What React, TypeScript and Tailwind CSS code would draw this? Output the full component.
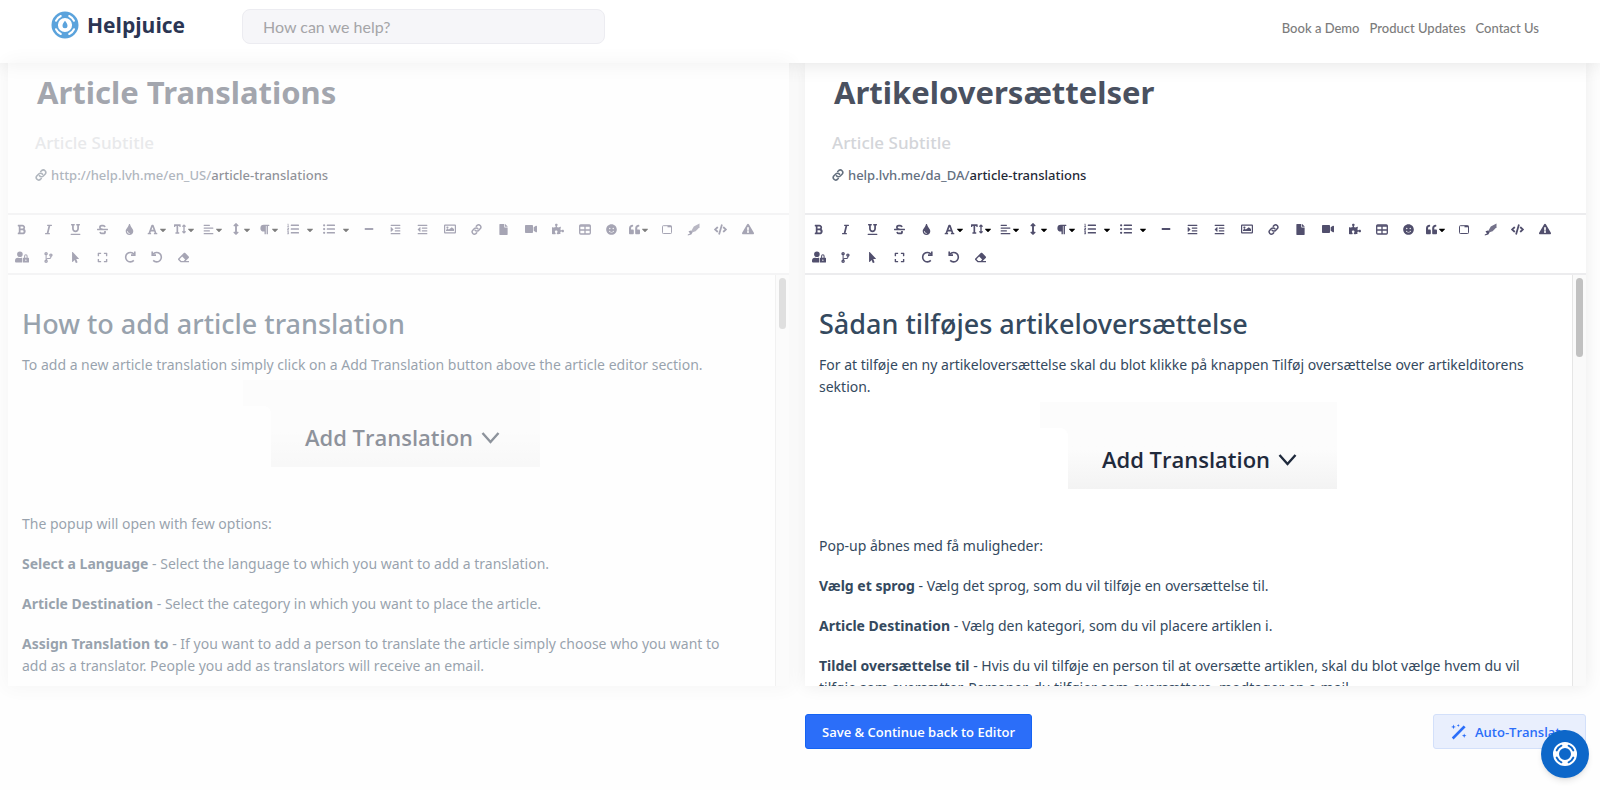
import type { ReactNode } from "react"
import {
    FaBold, FaItalic, FaUnderline, FaStrikethrough, FaTint, FaFont, FaTextHeight, FaAlignLeft, FaArrowsAltV,
    FaParagraph, FaListOl, FaListUl, FaMinus, FaIndent, FaOutdent, FaFile, FaVideo, FaPuzzlePiece,
    FaSmile, FaQuoteLeft, FaCode, FaExclamationTriangle, FaUserLock, FaCodeBranch, FaMousePointer,
    FaExpand, FaEraser, FaCaretDown
} from "react-icons/fa"

type Tool = { label: string, icon: ReactNode, menu?: boolean, wide?: boolean }

function LinkIcon({ size = 12 }: { size?: number }) {
    return (
        <svg width={size} height={size} viewBox="0 0 24 24" fill="none" stroke="currentColor" strokeWidth="3.2" strokeLinecap="round" strokeLinejoin="round">
            <path d="M9 13.500a5 5 0 0 0 7.500.500l4-4a5 5 0 0 0-7-7l-2 2" />
            <path d="M15 10.500a5 5 0 0 0-7.500-.500l-4 4a5 5 0 0 0 7 7l2-2" />
        </svg>
    )
}

function PictureIcon() {
    return (
        <svg width="12" height="10" viewBox="0 0 12 10" fill="currentColor">
            <path fillRule="evenodd" d="M1 .5h10a1 1 0 0 1 1 1v7a1 1 0 0 1-1 1H1a1 1 0 0 1-1-1v-7a1 1 0 0 1 1-1Zm.2 1.2v6.6h9.6V1.7Z" />
            <circle cx="3.4" cy="3.6" r="1.1" />
            <path d="M2 7V6l1.500-1.400 1.300.8L7.800 3.200 10 5v2Z" />
        </svg>
    )
}

function TableIcon() {
    return (
        <svg width="12" height="11" viewBox="0 0 12 11" fill="none" stroke="currentColor" strokeWidth="1.3">
            <rect x=".7" y="1" width="10.6" height="9" rx="1" />
            <path d="M.7 2h10.6M.7 6h10.6M6 2v8" />
        </svg>
    )
}

function TabIcon() {
    return (
        <svg width="10" height="9" viewBox="0 0 10 9" fill="none" stroke="currentColor" strokeWidth="1">
            <rect x=".5" y=".7" width="9" height="7.8" rx=".8" />
            <path d="M5.500 1.500h4" strokeWidth="1.600" />
        </svg>
    )
}

function BrushIcon() {
    return (
        <svg width="13" height="13" viewBox="0 0 13 13" fill="currentColor">
            <path d="M12.5.5v3.8L8.6 8.2 4.8 9.4 4 8.4 6.8 3.6Z" opacity=".8" />
            <path d="M1.5 8.3 4 7.4l1.5 2-1.2 2.2L.8 12.6v-1.2l2.2-.8Z" />
        </svg>
    )
}

function TurnIcon({ back }: { back?: boolean }) {
    return (
        <svg className={back ? "-scale-x-100" : ""} width="12" height="12" viewBox="0 0 12 12" fill="none" stroke="currentColor" strokeWidth="1.600">
            <path d="M9.800 9.400A4.700 4.700 0 1 1 10 3.200" />
            <path d="M10.800.6v3.500H7" />
        </svg>
    )
}

const tools: Tool[] = [
    { label: "Bold", icon: <FaBold size={11} /> },
    { label: "Italic", icon: <FaItalic size={11} /> },
    { label: "Underline", icon: <FaUnderline size={11} /> },
    { label: "Strikethrough", icon: <FaStrikethrough size={11} /> },
    { label: "Colors", icon: <FaTint size={11} /> },
    { label: "Font Family", icon: <FaFont size={11} />, menu: true },
    { label: "Font Size", icon: <FaTextHeight size={12} />, menu: true },
    { label: "Align", icon: <FaAlignLeft size={11} />, menu: true },
    { label: "Line Height", icon: <FaArrowsAltV size={12} />, menu: true },
    { label: "Paragraph Format", icon: <FaParagraph size={11} />, menu: true },
    { label: "Ordered List", icon: <FaListOl size={12} />, menu: true, wide: true },
    { label: "Unordered List", icon: <FaListUl size={12} />, menu: true, wide: true },
    { label: "Horizontal Line", icon: <FaMinus size={10} /> },
    { label: "Increase Indent", icon: <FaIndent size={11} /> },
    { label: "Decrease Indent", icon: <FaOutdent size={11} /> },
    { label: "Insert Image", icon: <PictureIcon /> },
    { label: "Insert Link", icon: <LinkIcon size={11} /> },
    { label: "Upload File", icon: <FaFile size={11} /> },
    { label: "Insert Video", icon: <FaVideo size={12} /> },
    { label: "Embed", icon: <FaPuzzlePiece size={12} /> },
    { label: "Insert Table", icon: <TableIcon /> },
    { label: "Emoticons", icon: <FaSmile size={11} /> },
    { label: "Quote", icon: <FaQuoteLeft size={11} />, menu: true },
    { label: "Tabs", icon: <TabIcon /> },
    { label: "Clear Style", icon: <BrushIcon /> },
    { label: "Code View", icon: <FaCode size={13} /> },
    { label: "Callout", icon: <FaExclamationTriangle size={12} /> },
    { label: "Internal Note", icon: <FaUserLock size={14} /> },
    { label: "Decision Tree", icon: <FaCodeBranch size={11} /> },
    { label: "Select All", icon: <FaMousePointer size={11} /> },
    { label: "Fullscreen", icon: <FaExpand size={11} /> },
    { label: "Redo", icon: <TurnIcon /> },
    { label: "Undo", icon: <TurnIcon back /> },
    { label: "Clear Formatting", icon: <FaEraser size={11} /> },
]

function Toolbar() {
    return (
        <div className="flex flex-wrap border-y-2 border-[#ececee] pr-4 pb-[2px] text-[#514f6d]">
            {tools.map((tool) => (
                <button
                    key={tool.label}
                    type="button"
                    aria-label={tool.label}
                    className={`flex h-7 items-center justify-center ${tool.wide ? "w-9 gap-[6px]" : tool.menu ? "w-7" : "w-[27px]"}`}
                >
                    {tool.icon}
                    {tool.menu && <FaCaretDown size={10} className="mt-[2px] shrink-0 text-black" />}
                </button>
            ))}
        </div>
    )
}

type PanelProps = {
    title: string
    host: string
    heading: string
    intro: string
    popup: string
    options: { name: string, text: string }[]
    faded?: boolean
}

function Panel({ title, host, heading, intro, popup, options, faded }: PanelProps) {
    return (
        <section className={`min-w-0 flex-1 bg-white shadow-[0_0_16px_rgba(0,0,0,0.08)] ${faded ? "opacity-50" : ""}`}>

            <div className="flex flex-col px-[27px] pt-2 pb-7">
                <h1 className="pl-[2px] text-[31px] leading-[42px] font-bold text-[#4a5160]">{title}</h1>
                <p className="mt-[18px] text-[17px] leading-6 font-medium text-[#d3d5d9]">Article Subtitle</p>
                <p className="mt-[10px] flex items-center text-[13px] leading-5 font-medium text-[#64707f]">
                    <span className="mr-1"><LinkIcon size={12} /></span>
                    <span>{host}<span className="text-[#1f2937]">article-translations</span></span>
                </p>
            </div>

            <Toolbar />

            {/* editor */}
            <div className="flex h-[411px] overflow-hidden text-[#34495e]">
                <div className="min-w-0 flex-1 px-[14px] pt-[31px] text-sm leading-[22px]">
                    <h2 className="text-[27px] leading-9 font-medium">{heading}</h2>
                    <p className="mt-3 pr-4">{intro}</p>
                    <div className="mx-auto mt-1 flex h-[87px] w-[297px] bg-linear-to-b from-[#fcfcfc] from-55% to-[#f3f3f3]">
                        <div className="mt-[26px] w-7 rounded-tr-lg bg-white"></div>
                        <div className="flex flex-1 items-end justify-center gap-2 pr-[6px] pb-4 font-['Open_Sans',sans-serif] text-[22px] leading-7 font-semibold text-[#1f2a3c]">
                            Add Translation
                            <svg className="mb-[6px]" width="19" height="14" viewBox="0 0 19 14" fill="none" stroke="currentColor" strokeWidth="2.4">
                                <path d="m1.5 2 8 9 8-9" />
                            </svg>
                        </div>
                    </div>
                    <p className="mt-[46px]">{popup}</p>
                    {options.map((option) => (
                        <p key={option.name} className="mt-[18px] pr-4">
                            <strong className="font-bold">{option.name}</strong> - {option.text}
                        </p>
                    ))}
                </div>

                {/* scrollbar */}
                <div className="w-[14px] border-l border-[#e6e6e6] bg-[#fafafa] px-[3px] pt-[3px]">
                    <div className={`rounded-full bg-[#c1c1c1] ${faded ? "h-[51px]" : "h-[79px]"}`}></div>
                </div>
            </div>

        </section>
    )
}

function LifeRing({ className }: { className: string }) {
    return (
        <svg className={className} viewBox="0 0 28 28" fill="none">
            <circle cx="14" cy="14" r="10.300" stroke="currentColor" strokeWidth="6.400" />
            <g stroke="white" strokeWidth="2" strokeLinecap="round">
                <path d="M5 9.800a10 10 0 0 1 4.800-4.800" />
                <path d="M18.200 5a10 10 0 0 1 4.800 4.800" />
                <path d="M23 18.200a10 10 0 0 1-4.800 4.800" />
                <path d="M9.800 23a10 10 0 0 1-4.800-4.800" />
            </g>
            <path d="M14 9.800c1.300 1.900 2.500 3.200 2.500 4.900a2.500 2.500 0 0 1-5 0c0-1.700 1.200-3 2.500-4.900Z" fill="currentColor" />
        </svg>
    )
}

export default function App() {

    return (

        <div className="min-h-screen bg-[#fefefe] font-['Noto_Sans',sans-serif]">

            <header className="relative flex h-[63px] items-start bg-white pr-[61px] pl-[51px] font-[Lato,sans-serif] shadow-[0_0_20px_rgba(0,0,0,0.12)]">
                <a href="#" className="mt-[11px] flex w-[191px] items-center gap-2 font-['Open_Sans',sans-serif] text-[21px] leading-7 font-bold text-[#2b3553]">
                    <LifeRing className="size-7 text-[#5ba3dc]" />
                    Helpjuice
                </a>
                <input
                    type="search"
                    aria-label="Search"
                    placeholder="How can we help?"
                    className="mt-[9px] h-[35px] w-[363px] rounded-lg border border-[#ececf1] bg-[#f6f6f9] px-5 text-base text-gray-600 placeholder:text-[#a5a5a8]"
                />
                <nav className="mt-[18px] ml-auto flex gap-[10px] text-[13px] leading-5 font-medium text-[#7c7c7c]">
                    <a href="#">Book a Demo</a>
                    <a href="#">Product Updates</a>
                    <a href="#">Contact Us</a>
                </nav>
            </header>

            <main className="pr-[14px] pl-2">
                <div className="flex gap-4">
                    <Panel
                        faded
                        title="Article Translations"
                        host="http://help.lvh.me/en_US/"
                        heading="How to add article translation"
                        intro="To add a new article translation simply click on a Add Translation button above the article editor section."
                        popup="The popup will open with few options:"
                        options={[
                            { name: "Select a Language", text: "Select the language to which you want to add a translation." },
                            { name: "Article Destination", text: "Select the category in which you want to place the article." },
                            { name: "Assign Translation to", text: "If you want to add a person to translate the article simply choose who you want to add as a translator. People you add as translators will receive an email." },
                        ]}
                    />
                    <Panel
                        title="Artikeloversættelser"
                        host="help.lvh.me/da_DA/"
                        heading="Sådan tilføjes artikeloversættelse"
                        intro="For at tilføje en ny artikeloversættelse skal du blot klikke på knappen Tilføj oversættelse over artikelditorens sektion."
                        popup="Pop-up åbnes med få muligheder:"
                        options={[
                            { name: "Vælg et sprog", text: "Vælg det sprog, som du vil tilføje en oversættelse til." },
                            { name: "Article Destination", text: "Vælg den kategori, som du vil placere artiklen i." },
                            { name: "Tildel oversættelse til", text: "Hvis du vil tilføje en person til at oversætte artiklen, skal du blot vælge hvem du vil tilføje som oversætter. Personer, du tilføjer som oversættere, modtager en e-mail." },
                        ]}
                    />
                </div>

                {/* actions */}
                <div className="flex gap-4 pt-7 font-['Open_Sans',sans-serif] text-[13px] leading-5 font-semibold">
                    <div className="flex-1"></div>
                    <div className="flex flex-1 items-center justify-between">
                        <button type="button" className="h-[35px] rounded-[3px] border border-[#1463f3] bg-[#2b6ef9] px-4 text-white">
                            Save &amp; Continue back to Editor
                        </button>
                        <button type="button" className="flex h-[35px] items-center gap-2 rounded-[3px] border border-[#d3e0fa] bg-[#e9effd] px-[17px] text-[#2b6ef9]">
                            <svg width="16" height="16" viewBox="0 0 16 16" fill="currentColor">
                                <path d="m.8 13.600 11.800-12.200 2 1.800L2.600 15.400Z" />
                                <path d="m2.500.500.6 1.800 1.800.6-1.800.6-.6 1.800-.6-1.800-1.800-.6 1.800-.6ZM13.200 9.500l.6 1.600 1.700.6-1.700.6-.6 1.700-.6-1.700-1.700-.6 1.700-.6ZM7.300 0l.4 1.100 1.100.4-1.100.4-.4 1.100-.4-1.100-1.100-.4 1.100-.4Z" />
                            </svg>
                            Auto-Translate
                        </button>
                    </div>
                </div>
            </main>

            <button type="button" aria-label="Help" className="fixed right-[11px] bottom-3 flex size-12 items-center justify-center rounded-full bg-[#0d67c9] shadow-md">
                <svg width="24" height="24" viewBox="0 0 24 24" fill="none">
                    <circle cx="12" cy="12" r="9" stroke="white" strokeWidth="6" />
                    <g stroke="#0d67c9" strokeWidth="2" strokeLinecap="round">
                        <path d="M3.700 8.400a9 9 0 0 1 4.700-4.700" />
                        <path d="M15.600 3.700a9 9 0 0 1 4.700 4.700" />
                        <path d="M20.300 15.600a9 9 0 0 1-4.700 4.700" />
                        <path d="M8.400 20.300a9 9 0 0 1-4.700-4.700" />
                    </g>
                </svg>
            </button>

        </div>

    )

}
